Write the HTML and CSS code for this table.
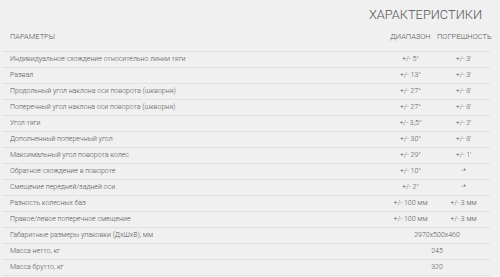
FILE: index.html
```html
<!DOCTYPE html>
<html lang="ru">
<head>
<meta charset="utf-8">
<link rel="stylesheet" href="styles.css">
</head>
<body>
<div class="page">
  <h1 class="title">ХАРАКТЕРИСТИКИ</h1>
  <table class="specs">
    <thead>
      <tr>
        <th class="name">ПАРАМЕТРЫ</th>
        <th class="val">ДИАПАЗОН</th>
        <th class="val">ПОГРЕШНОСТЬ</th>
      </tr>
    </thead>
    <tbody>
      <tr><td class="name">Индивидуальное схождение относительно линии тяги</td><td class="val">+/- 5°</td><td class="val">+/- 3'</td></tr>
      <tr><td class="name">Развал</td><td class="val">+/- 13°</td><td class="val">+/- 3'</td></tr>
      <tr><td class="name">Продольный угол наклона оси поворота (шкворня)</td><td class="val">+/- 27°</td><td class="val">+/- 8'</td></tr>
      <tr><td class="name">Поперечный угол наклона оси поворота (шкворня)</td><td class="val">+/- 27°</td><td class="val">+/- 8'</td></tr>
      <tr><td class="name">Угол тяги</td><td class="val">+/- 3,5°</td><td class="val">+/- 2'</td></tr>
      <tr><td class="name">Дополненный поперечный угол</td><td class="val">+/- 30°</td><td class="val">+/- 8'</td></tr>
      <tr><td class="name">Максимальный угол поворота колес</td><td class="val">+/- 29°</td><td class="val">+/- 1'</td></tr>
      <tr><td class="name">Обратное схождение в повороте</td><td class="val">+/- 10°</td><td class="val">-*</td></tr>
      <tr><td class="name">Смещение передней/задней оси</td><td class="val">+/- 2°</td><td class="val">-*</td></tr>
      <tr><td class="name">Разность колесных баз</td><td class="val">+/- 100 мм</td><td class="val">+/- 3 мм</td></tr>
      <tr><td class="name">Правое/левое поперечное смещение</td><td class="val">+/- 100 мм</td><td class="val">+/- 3 мм</td></tr>
      <tr><td class="name">Габаритные размеры упаковки (ДхШхВ), мм</td><td class="val" colspan="2">2970x500x460</td></tr>
      <tr><td class="name">Масса нетто, кг</td><td class="val" colspan="2">245</td></tr>
      <tr><td class="name">Масса брутто, кг</td><td class="val" colspan="2">320</td></tr>
    </tbody>
  </table>
</div>
</body>
</html>
```
FILE: styles.css
```css
html, body {
  margin: 0;
  padding: 0;
  background: #f0f0f0;
}
.page {
  width: 488px;
  padding: 0 0 0 2px;
  font-family: Roboto, "Liberation Sans", sans-serif;
  color: #555;
}
.title {
  margin: 0;
  padding: 5px 8px 3px 0;
  height: 20px;
  line-height: 20px;
  font-size: 12.8px;
  font-weight: 300;
  text-align: right;
  color: #555;
}
.specs {
  width: 488px;
  border-collapse: collapse;
  table-layout: fixed;
}
.specs th {
  height: 18px;
  padding: 0 0 5px 0;
  line-height: 8px;
  font-size: 7.5px;
  font-weight: 300;
  color: #555;
  vertical-align: middle;
  border-bottom: 1px solid #e2e2e2;
}
.specs td {
  height: 13px;
  padding: 0 0 2px 0;
  line-height: 8px;
  font-size: 7px;
  font-weight: 300;
  color: #555;
  vertical-align: middle;
  border-bottom: 1px solid #e2e2e2;
}
.specs .name {
  text-align: left;
  padding-left: 8px;
}
.specs .val {
  text-align: center;
  width: 53px;
}
```
